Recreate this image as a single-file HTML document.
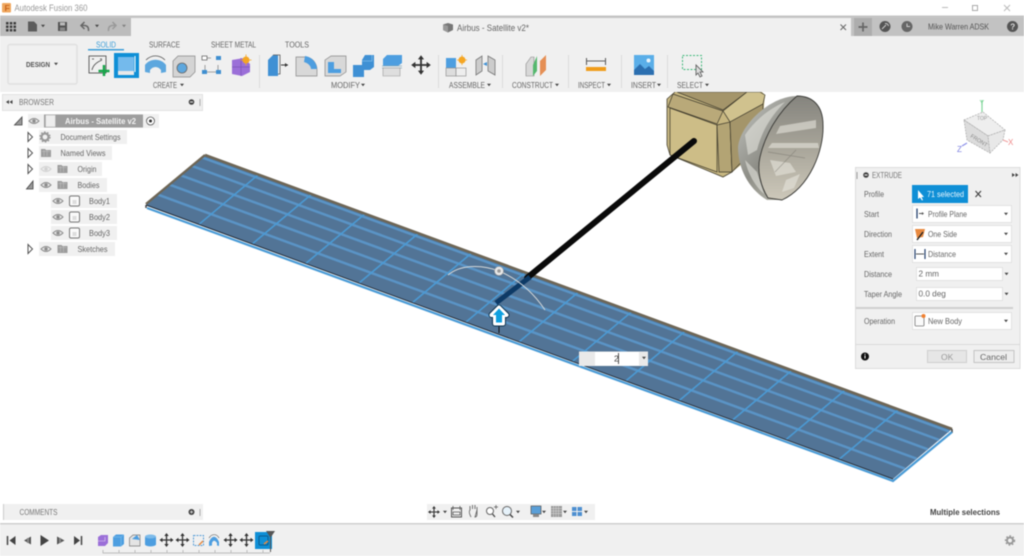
<!DOCTYPE html>
<html>
<head>
<meta charset="utf-8">
<style>
html,body{margin:0;padding:0;background:#fff;width:1024px;height:556px;overflow:hidden}
svg{display:block;filter:blur(.4px)}
text{font-family:"Liberation Sans",sans-serif;font-size:8.500px;fill:#666}
.s{stroke:#5a94c6;stroke-width:2.500;fill:none;vector-effect:non-scaling-stroke}
.l{stroke:#4b9ad4;stroke-width:1.600;fill:none;vector-effect:non-scaling-stroke}
</style>
</head>
<body>
<svg width="1024" height="556" viewBox="0 0 1024 556" xmlns="http://www.w3.org/2000/svg">
<defs>
<g id="eye"><path d="M-5 0Q0-5 5 0Q0 5-5 0Z" fill="#e4e4e4" stroke="#8c8c8c" stroke-width="1"/><circle r="1.700" fill="#8c8c8c"/></g>
<g id="folder"><path d="M-5-4H-1L0-3H5V4H-5Z" fill="#9c9c9c"/><path d="M-4-1.500H4M-2-3V3M1-3V3" stroke="#c4c4c4" stroke-width=".5"/></g>
<g id="mv"><path d="M0-6V6M-6 0H6" stroke="#333" stroke-width="1.300"/><path d="M0-7L-2.200-4H2.200ZM0 7L-2.200 4H2.200ZM-7 0L-4-2.200V2.200ZM7 0L4-2.200V2.200Z" fill="#333"/></g>
<g id="body"><rect x="-5" y="-5" width="10" height="10" rx="1.500" fill="#fafafa" stroke="#777"/><rect x="-2" y="-1" width="4" height="4" fill="#ddd"/></g>
<path id="dn" d="M-2-1.200H2L0 1.200Z" fill="#444"/>
<path id="tri" d="M0-4.500L4.500 0L0 4.500Z" fill="#fff" stroke="#555" stroke-width="1"/>
<linearGradient id="dishO" x1="0" y1="0" x2="1" y2="1"><stop offset="0" stop-color="#c4c6c2"/><stop offset=".45" stop-color="#8e8e87"/><stop offset=".75" stop-color="#b5b5aa"/><stop offset="1" stop-color="#85857c"/></linearGradient>
<linearGradient id="dishI" x1="0" y1="0" x2="0" y2="1"><stop offset="0" stop-color="#85847e"/><stop offset=".45" stop-color="#a5a297"/><stop offset="1" stop-color="#cdc8ba"/></linearGradient>
<clipPath id="vp"><rect x="0" y="92" width="1024" height="431"/></clipPath>
</defs>

<!-- viewport -->
<rect width="1024" height="556" fill="#fff"/>
<g clip-path="url(#vp)">
 <!-- satellite body -->
 <path d="M675 92L667 99V145L670 155L723 177L732 172L760 150L765 95L760 90H675Z" fill="#c6b680"/>
 <path d="M677 92H747L723 110Z" fill="#a4956a" stroke="#3e3a2c" stroke-width=".7"/>
 <path d="M673 94L723 111L717 124L668 107Z" fill="#b9a979" stroke="#3e3a2c" stroke-width=".7"/>
 <path d="M670 108L717 125V172L670 155Z" fill="#cdbd87" stroke="#3e3a2c" stroke-width=".7"/>
 <path d="M717 125L730 122L732 172L719 172Z" fill="#b3a474" stroke="#3e3a2c" stroke-width=".7"/>
 <path d="M723 111L747 92H760L765 95L763 104L730 122Z" fill="#d0c28e" stroke="#3e3a2c" stroke-width=".7"/>
 <path d="M730 122L763 104V140L732 172Z" fill="#a4956a" stroke="#3e3a2c" stroke-width=".7"/>
 <path d="M675 92L667 99V145L670 155L723 177L732 172" fill="none" stroke="#4a4534" stroke-width=".8"/>
 <!-- dish -->
 <path d="M797 96C770 96 740 125 738 147C738 170 750 190 767 200L782 200C810 187 824 150 823 125C822 105 812 96 797 96Z" fill="url(#dishO)"/>
 <path d="M745 135C755 120 770 108 785 102C772 115 762 130 757 150L748 155ZM745 160L757 172L764 194C755 186 748 174 745 160Z" fill="#e2e2dc" opacity=".6"/>
 <path d="M797 96C812 96 823 105 823 125C824 150 810 187 782 200L768 198C760 185 757 170 760 157C765 135 778 112 797 96Z" fill="url(#dishI)" stroke="#3a3a36" stroke-width=".9"/>
 <path d="M772 143H818L819 148H768ZM780 126L816 120V128L776 134ZM770 160L790 163L796 172L776 176ZM786 180L800 174L794 188L782 192Z" fill="#e6e4dc" opacity=".6"/>
 <path d="M768 152L805 158M775 172L796 150" stroke="#6e6c64" stroke-width=".7" opacity=".5" fill="none"/>
 <!-- panel -->
 <path d="M205 155L952 429L893 479L146 205Z" fill="#527496"/>
 <g transform="matrix(53.357 19.571 -59 49.500 205 155)">
  <path class="s" d="M0 .05H14M0 .22H14M0 .41H14M0 .6H14M0 .8H14"/>
  <path class="l" d="M1 0V1M2 0V1M3 0V1M4 0V1M5 0V1M6 0V1M7 0V1M8 0V1M9 0V1M10 0V1M11 0V1M12 0V1M13 0V1"/>
 </g>
 <path d="M205 155L952 429" stroke="#6e6656" stroke-width="2.600" fill="none"/>
 <path d="M205 155L146 204" stroke="#6e6656" stroke-width="2.400" fill="none"/>
 <path d="M146 205L146 208M952 429V433" stroke="#444" stroke-width="1.500"/>
 <path d="M146 205L893 479" stroke="#1f2b3a" stroke-width="1" fill="none"/>
 <path d="M147 208L893 481L952 432" stroke="#4a9bd6" stroke-width="2.200" fill="none"/>
 <!-- rod -->
 <path d="M694 141L527 278" stroke="#0a0a0a" stroke-width="6" stroke-linecap="round"/>
 <path d="M530 277L496 303" stroke="#0d3a66" stroke-width="5"/>
 <!-- manipulator -->
 <path d="M448 275C460 265 480 264 499 271C520 280 535 295 545 310" fill="none" stroke="#d4d8da" stroke-width="1"/>
 <circle cx="499" cy="271" r="4.500" fill="#e8e8e8" stroke="#999" stroke-width=".6"/><circle cx="499" cy="271" r="1.800" fill="#999"/>
 <path d="M499 325V333" stroke="#111" stroke-width="1"/>
 <path d="M499 307.500L506.500 315H503V323.500H495V315H491.500Z" fill="#0b3350" stroke="#0b3350" stroke-width="6" stroke-linejoin="round"/>
 <path d="M499 307.500L506.500 315H503V323.500H495V315H491.500Z" fill="#0ea0e0" stroke="#fff" stroke-width="4" stroke-linejoin="round"/>
 <path d="M499 308.500L505 315H502V322.500H496V315H493Z" fill="#0ea0e0"/>
 <!-- input -->
 <rect x="579" y="351.500" width="69" height="14.500" fill="#e9e9e9"/>
 <rect x="595" y="352" width="44" height="13.500" fill="#fff"/>
 <text x="614" y="361.500" style="fill:#444">2</text><path d="M618.500 353V364" stroke="#222" stroke-width=".8"/>
 <use href="#dn" x="644" y="358"/>
 <!-- view cube -->
 <path d="M964 120L983 112L1005 130L990 153L967 140Z" fill="#e3e3e3"/>
 <path d="M983 112L1005 130L988 136L964 120Z" fill="#eeeeee" stroke="#aaa" stroke-width=".7" stroke-dasharray="2 1"/>
 <path d="M964 120L988 136L990 153L967 140Z" fill="#dcdcdc" stroke="#aaa" stroke-width=".7" stroke-dasharray="2 1"/>
 <path d="M988 136L1005 130L1003 140L990 153Z" fill="#e8e8e8" stroke="#aaa" stroke-width=".7" stroke-dasharray="2 1"/>
 <text x="977" y="120" style="font-size:5px;fill:#999">TOP</text>
 <text x="970" y="137" transform="rotate(32 970 137)" style="font-size:5.500px;fill:#888">FRONT</text>
 <path d="M982 112V100" stroke="#7fd69a" stroke-width="1.200"/><text x="979.500" y="105" style="font-size:7px;fill:#6fce8c">Y</text>
 <path d="M1003 140L1008 142" stroke="#f0a0a0" stroke-width="1.200"/><text x="1008" y="145" style="font-size:8px;fill:#ee8888">X</text>
 <path d="M967 143L962 146" stroke="#8a8ee8" stroke-width="1.200"/><text x="957" y="152" style="font-size:8px;fill:#7a7ee0">Z</text>
</g>

<!-- title bar -->
<rect width="1024" height="15.500" fill="#fff"/>
<rect x="2" y="3" width="9" height="9.500" rx="1" fill="#f0a860"/>
<text x="4.500" y="11" style="font-size:8.500px;font-weight:bold;fill:#c8641c">F</text>
<text x="14.500" y="11" textLength="73" lengthAdjust="spacingAndGlyphs" style="font-size:9.500px;fill:#999">Autodesk Fusion 360</text>
<path d="M942 7.500H948" stroke="#bbb"/>
<rect x="972.500" y="5.500" width="5" height="5" fill="none" stroke="#aaa"/>
<path d="M1004 5L1010 11M1010 5L1004 11" stroke="#bbb"/>
<rect y="15.500" width="1024" height="2.500" fill="#c4c4c4"/>

<!-- toolbar bg -->
<rect y="18" width="1024" height="74" fill="#f0f0f0"/>
<rect y="18" width="131" height="18" fill="#bcbcbc"/>
<rect x="851" y="18" width="173" height="18" fill="#c2c2c2"/>
<rect x="854" y="18" width="18" height="18" fill="#adadad"/>
<!-- quick access -->
<path d="M6 22h2.500v2.500H6zM9.800 22h2.500v2.500H9.800zM13.500 22h2.500v2.500h-2.500zM6 25.500h2.500V28H6zM9.800 25.500h2.500V28H9.800zM13.500 25.500h2.500V28h-2.500zM6 29h2.500v2.500H6zM9.800 29h2.500v2.500H9.800zM13.500 29h2.500v2.500h-2.500z" fill="#3f3f3f"/>
<path d="M28 21.500H34L37 24.500V31.500H28Z" fill="#5c5c5c"/>
<use href="#dn" x="43" y="26"/>
<rect x="58" y="22" width="9" height="9" fill="#555"/><rect x="60" y="22.500" width="5" height="3" fill="#bbb"/><rect x="60" y="27.500" width="5" height="3" fill="#888"/>
<path d="M88.500 31C89 26 86 25 81.500 25.500M84.500 22L81 25.500L84.500 29" fill="none" stroke="#666" stroke-width="1.500"/>
<use href="#dn" x="97" y="26"/>
<path d="M108.500 31C108 26 111 25 115.500 25.500M112.500 22L116 25.500L112.500 29" fill="none" stroke="#999" stroke-width="1.500"/>
<use href="#dn" x="124" y="26" opacity=".5"/>
<!-- doc tab -->
<path d="M443 24.500L448 23L453 24.500V30L448 32.500L443 30Z" fill="#777"/><path d="M443 24.500L448 26V32.500L443 30Z" fill="#999"/>
<text x="457" y="31" textLength="72" lengthAdjust="spacingAndGlyphs" style="font-size:9px;fill:#666">Airbus - Satellite v2*</text>
<path d="M840.500 24.500L846 30M846 24.500L840.500 30" stroke="#666" stroke-width="1"/>
<path d="M863 22.500V31.500M858.500 27H867.500" stroke="#666" stroke-width="1.700"/>
<circle cx="885" cy="26.500" r="5.500" fill="#555"/><path d="M882 29L886 25M885 23.500A3 3 0 0 1 888.500 26" stroke="#ccc" stroke-width="1" fill="none"/>
<circle cx="907" cy="26.500" r="5.500" fill="#666"/><path d="M907 23.500V26.500H910" stroke="#ccc" stroke-width="1" fill="none"/>
<text x="928" y="29.500" textLength="61" lengthAdjust="spacingAndGlyphs" style="font-size:8.500px;fill:#555">Mike Warren ADSK</text>
<circle cx="1012.500" cy="26.500" r="5.500" fill="#555"/><text x="1010.300" y="29.500" style="font-size:8px;font-weight:bold;fill:#ddd">?</text>

<!-- design button -->
<rect x="8" y="44.500" width="69" height="39.500" rx="2" fill="#f1f1f1" stroke="#e0e0e0" stroke-width="1.500"/>
<text x="26" y="67" textLength="24" lengthAdjust="spacingAndGlyphs" style="font-size:7.500px;font-weight:bold;fill:#555">DESIGN</text>
<use href="#dn" x="56" y="64"/>
<!-- tabs -->
<text x="96" y="47.500" textLength="20" lengthAdjust="spacingAndGlyphs" style="font-size:8px;fill:#3d9ed8">SOLID</text>
<rect x="88" y="49" width="36" height="1.500" fill="#3d9ed8"/>
<text x="149" y="47.500" textLength="31" lengthAdjust="spacingAndGlyphs" style="font-size:8px">SURFACE</text>
<text x="211" y="47.500" textLength="45" lengthAdjust="spacingAndGlyphs" style="font-size:8px">SHEET METAL</text>
<text x="285" y="47.500" textLength="24" lengthAdjust="spacingAndGlyphs" style="font-size:8px">TOOLS</text>

<!-- create icons -->
<rect x="89" y="56" width="17" height="17" fill="none" stroke="#444" stroke-width=".8"/>
<path d="M92 70C93 65 97 62 102 60" fill="none" stroke="#444" stroke-width=".8"/>
<path d="M92 59H94M100 59H102" stroke="#666"/>
<path d="M104 65V76M98.500 71H109.500" stroke="#17a54a" stroke-width="2.500"/>
<rect x="114" y="53" width="25" height="25" fill="#0f8fd6"/>
<path d="M118 57H134V74H118Z" fill="#74baec"/><path d="M118 71H134V75H118Z" fill="#e9e9e9"/><path d="M135 56V72" stroke="#fff"/>
<path d="M145 65C150 58 161 58 166 65V72L161 73V70C158 66 153 66 150 70V73L145 72Z" fill="#5da7de"/><path d="M146 60C152 54 160 55 165 60" fill="none" stroke="#555" stroke-width=".8"/>
<path d="M173 61L178 56H195V72L190 77H173Z" fill="#d4d4d4" stroke="#888" stroke-width=".7"/><circle cx="182" cy="68" r="5" fill="#5da7de" stroke="#666" stroke-width=".8"/>
<path d="M205 58H211M205 65V71M207 72H216M218 65V70" stroke="#888" stroke-width=".8"/>
<rect x="202" y="56" width="5" height="4" fill="#fff" stroke="#555" stroke-width=".7"/><rect x="216" y="56" width="5" height="4" fill="#3f8fd0"/><rect x="202" y="70" width="5" height="4" fill="#3f8fd0"/><rect x="216" y="70" width="5" height="4" fill="#3f8fd0"/>
<path d="M232 60L244 58L250 64V72L242 76L232 74Z" fill="#9b6fd8"/><path d="M232 67H250M241 58V76" stroke="#7c55b8" stroke-width=".7"/>
<circle cx="246" cy="60" r="3.500" fill="#f5a623"/><path d="M246 54.500V65.500M240.500 60H251.500" stroke="#f5a623" stroke-width=".8"/>
<text x="153" y="88" textLength="24" lengthAdjust="spacingAndGlyphs" style="font-size:7.800px">CREATE</text><use href="#dn" x="182" y="85"/>
<rect x="259" y="55" width="1" height="33" fill="#dcdcdc"/>

<!-- modify icons -->
<path d="M268 60L273 55H278V76H268Z" fill="#3f90d4"/><path d="M273 55H280V74H278" fill="none" stroke="#555" stroke-width=".8"/><path d="M281 65H288" stroke="#333"/><path d="M288 65L285 63V67Z" fill="#333"/>
<path d="M296 57H305C312 57 317 63 317 70V76H296Z" fill="#d8d8d8" stroke="#888" stroke-width=".7"/><path d="M305 56C312 57 317 63 317 69H311C311 66 308 63 304 62Z" fill="#4d9ee0"/>
<path d="M325 60L331 56H346V72L340 76H325Z" fill="#d8d8d8" stroke="#888" stroke-width=".7"/><path d="M328 62H334V69H341V73H328Z" fill="#4d9ee0"/>
<path d="M353 65H362V60L365 55H374V67L370 70H364V77H353Z" fill="#3f90d4"/><path d="M362 61H372V55" fill="none" stroke="#7dbbea" stroke-width=".8"/>
<path d="M383 59L387 55H402V63L398 66H383Z" fill="#4d9ee0"/><path d="M382 66H402M382 68H402" stroke="#8ab" stroke-width=".8"/><path d="M383 68H400V76H383Z" fill="#dedede" stroke="#999" stroke-width=".6"/>
<use href="#mv" transform="translate(421 65) scale(1.400)"/>
<text x="331" y="88" textLength="29" lengthAdjust="spacingAndGlyphs" style="font-size:7.800px">MODIFY</text><use href="#dn" x="363" y="85"/>
<rect x="438" y="55" width="1" height="33" fill="#dcdcdc"/>

<!-- assemble -->
<rect x="446" y="58" width="10" height="10" fill="#4d9ee0"/><rect x="446" y="68" width="10" height="8" fill="#ddd" stroke="#888" stroke-width=".6"/><rect x="456" y="68" width="10" height="8" fill="#eee" stroke="#888" stroke-width=".6"/>
<circle cx="462" cy="60" r="3.500" fill="#f5a623"/><path d="M462 55V65M457 60H467" stroke="#f5a623" stroke-width=".8"/>
<path d="M476 60L482 56V71L476 75ZM488 56L495 60V75L488 71Z" fill="#ccc" stroke="#777" stroke-width=".8"/><path d="M483 64L487 62V66Z" fill="#3f90d4"/>
<text x="449" y="88" textLength="36" lengthAdjust="spacingAndGlyphs" style="font-size:7.800px">ASSEMBLE</text><use href="#dn" x="489" y="85"/>
<rect x="502" y="55" width="1" height="33" fill="#dcdcdc"/>

<!-- construct -->
<path d="M526 64L531 57H534V76H526Z" fill="#d8d8d8" stroke="#888" stroke-width=".6"/>
<path d="M533 65L537 56V71L533 76Z" fill="#55b86e"/><path d="M540 61L546 55V70L540 76Z" fill="#e58f55"/>
<text x="512" y="88" textLength="41" lengthAdjust="spacingAndGlyphs" style="font-size:7.800px">CONSTRUCT</text><use href="#dn" x="557" y="85"/>
<rect x="568" y="55" width="1" height="33" fill="#dcdcdc"/>

<!-- inspect -->
<path d="M587 61H605M586.500 58V65M605.500 58V65" stroke="#333" stroke-width=".8"/>
<rect x="586" y="67" width="20" height="4" fill="#f09c1a"/>
<text x="578" y="88" textLength="27" lengthAdjust="spacingAndGlyphs" style="font-size:7.800px">INSPECT</text><use href="#dn" x="609" y="85"/>
<rect x="621" y="55" width="1" height="33" fill="#dcdcdc"/>

<!-- insert -->
<rect x="634" y="55" width="20" height="20" fill="#5aaee8"/>
<path d="M634 75V70L640 64L645 69L649 66L654 71V75Z" fill="#2c6fb0"/><circle cx="648.500" cy="60.500" r="2" fill="#e8f4fc"/>
<text x="631" y="88" textLength="25" lengthAdjust="spacingAndGlyphs" style="font-size:7.800px">INSERT</text><use href="#dn" x="659" y="85"/>
<rect x="667" y="55" width="1" height="33" fill="#dcdcdc"/>

<!-- select -->
<rect x="682.500" y="55.500" width="19" height="14" fill="none" stroke="#3fb77a" stroke-dasharray="2 1.500"/>
<path d="M696 65V75L698 73L700 77L702 76L700 72L703 72Z" fill="#ddd" stroke="#555" stroke-width=".8"/>
<text x="677" y="88" textLength="26" lengthAdjust="spacingAndGlyphs" style="font-size:7.800px">SELECT</text><use href="#dn" x="707" y="85"/>

<!-- browser -->
<rect x="2.500" y="94.500" width="200" height="16" fill="#f0f0f0" stroke="#e2e2e2"/>
<path d="M6 102L9 100V104ZM9.500 102L12.500 100V104Z" fill="#444"/>
<text x="19" y="105" textLength="35" lengthAdjust="spacingAndGlyphs" style="font-size:8px;fill:#777">BROWSER</text>
<circle cx="191.500" cy="102" r="2.800" fill="#444"/><rect x="190" y="101.500" width="3" height="1" fill="#eee"/>
<rect x="199.500" y="99" width="1" height="7" fill="#aaa"/>

<g>
<rect x="28" y="114" width="131" height="14" fill="#f0f0f0"/>
<rect x="44" y="114.500" width="99" height="13" fill="#9e9e9e"/>
<rect x="45.500" y="115" width="10" height="12" fill="#eee" stroke="#aaa" stroke-width=".5"/>
<text x="65" y="124" textLength="71" lengthAdjust="spacingAndGlyphs" style="font-size:8.500px;font-weight:bold;fill:#f4f4f4">Airbus - Satellite v2</text>
<circle cx="150.500" cy="121" r="4" fill="#fff" stroke="#555" stroke-width=".8"/><circle cx="150.500" cy="121" r="1.500" fill="#333"/>
<use href="#eye" x="34" y="121"/>
<path d="M14.500 125H22V117Z" fill="#999" stroke="#444" stroke-width=".8"/>

<rect x="39" y="130" width="88" height="14" fill="#f0f0f0"/>
<use href="#tri" x="28" y="137"/>
<circle cx="45" cy="137" r="3.500" fill="none" stroke="#999" stroke-width="2.200"/><circle cx="45" cy="137" r="5" fill="none" stroke="#999" stroke-width="1.300" stroke-dasharray="1.600 1.600"/>
<text x="60.500" y="140" textLength="60" lengthAdjust="spacingAndGlyphs" style="font-size:8.500px">Document Settings</text>

<rect x="39" y="146" width="73" height="14" fill="#f0f0f0"/>
<use href="#tri" x="28" y="153"/>
<use href="#folder" x="46" y="153"/>
<text x="60.500" y="156" textLength="45" lengthAdjust="spacingAndGlyphs" style="font-size:8.500px">Named Views</text>

<rect x="39" y="162" width="63" height="14" fill="#f0f0f0"/>
<use href="#tri" x="28" y="169"/>
<use href="#eye" x="46" y="169" opacity=".3"/>
<use href="#folder" x="62.500" y="169"/>
<text x="77.500" y="172" textLength="19" lengthAdjust="spacingAndGlyphs" style="font-size:8.500px">Origin</text>

<rect x="39" y="178" width="68" height="14" fill="#f0f0f0"/>
<path d="M26.500 189H33V181Z" fill="#999" stroke="#444" stroke-width=".8"/>
<use href="#eye" x="46" y="185"/>
<use href="#folder" x="62.500" y="185"/>
<text x="77.500" y="188" textLength="22" lengthAdjust="spacingAndGlyphs" style="font-size:8.500px">Bodies</text>

<rect x="51" y="194" width="66" height="14" fill="#f0f0f0"/>
<use href="#eye" x="58" y="201"/><use href="#body" x="74.500" y="201"/>
<text x="89" y="204" textLength="21" lengthAdjust="spacingAndGlyphs" style="font-size:8.500px">Body1</text>
<rect x="51" y="210" width="66" height="14" fill="#f0f0f0"/>
<use href="#eye" x="58" y="217"/><use href="#body" x="74.500" y="217"/>
<text x="89" y="220" textLength="21" lengthAdjust="spacingAndGlyphs" style="font-size:8.500px">Body2</text>
<rect x="51" y="226" width="66" height="14" fill="#f0f0f0"/>
<use href="#eye" x="58" y="233"/><use href="#body" x="74.500" y="233"/>
<text x="89" y="236" textLength="21" lengthAdjust="spacingAndGlyphs" style="font-size:8.500px">Body3</text>

<rect x="39" y="242" width="76" height="14" fill="#f0f0f0"/>
<use href="#tri" x="28" y="249"/>
<use href="#eye" x="46" y="249"/>
<use href="#folder" x="62.500" y="249"/>
<text x="77.500" y="252" textLength="30" lengthAdjust="spacingAndGlyphs" style="font-size:8.500px">Sketches</text>
</g>

<!-- extrude panel -->
<rect x="855.500" y="167.500" width="164.500" height="201" fill="#f0f0f0" stroke="#dcdcdc"/>
<path d="M857 172V179" stroke="#999"/>
<circle cx="866" cy="175" r="2.800" fill="#444"/><rect x="864.500" y="174.500" width="3" height="1" fill="#eee"/>
<text x="872" y="178" textLength="30" lengthAdjust="spacingAndGlyphs" style="font-size:8px;fill:#777">EXTRUDE</text>
<path d="M1012 173L1015 175L1012 177ZM1015.500 173L1018.500 175L1015.500 177Z" fill="#444"/>
<text x="864" y="197" textLength="20" lengthAdjust="spacingAndGlyphs" style="font-size:8.200px">Profile</text>
<rect x="912" y="185" width="56" height="18" fill="#0f8fd6"/>
<path d="M918 190V199L920 197.500L922 200.500L923 200L921.500 197H924Z" fill="#fff"/>
<text x="927" y="197" textLength="37" lengthAdjust="spacingAndGlyphs" style="font-size:8.500px;fill:#e8f6ff">71 selected</text>
<path d="M975.500 191L981 197M981 191L975.500 197" stroke="#444" stroke-width="1.200"/>

<text x="864" y="217" textLength="15" lengthAdjust="spacingAndGlyphs" style="font-size:8.200px">Start</text>
<rect x="912.500" y="205.500" width="99" height="17" fill="#fff" stroke="#e2e2e2"/>
<path d="M917 208.500V218.500" stroke="#23406e" stroke-width="1.300"/><path d="M919 213.500H922.500" stroke="#555"/><path d="M924 213.500L922 212V215Z" fill="#555"/>
<text x="928" y="217" textLength="39" lengthAdjust="spacingAndGlyphs" style="font-size:8.200px">Profile Plane</text>
<use href="#dn" x="1006" y="214"/>

<text x="864" y="237" textLength="28" lengthAdjust="spacingAndGlyphs" style="font-size:8.200px">Direction</text>
<rect x="912.500" y="225.500" width="99" height="17" fill="#fff" stroke="#e2e2e2"/>
<path d="M915 229L925 229L923 237L917 238Z" fill="#e8893f"/><path d="M917 240L923 232" stroke="#222" stroke-width="1.400"/>
<text x="928" y="237" textLength="29" lengthAdjust="spacingAndGlyphs" style="font-size:8.200px">One Side</text>
<use href="#dn" x="1006" y="234"/>

<text x="864" y="257" textLength="20" lengthAdjust="spacingAndGlyphs" style="font-size:8.200px">Extent</text>
<rect x="912.500" y="245.500" width="99" height="17" fill="#fff" stroke="#e2e2e2"/>
<path d="M915 249V259M925 249V259" stroke="#23406e" stroke-width="1.200"/><path d="M916 254H924" stroke="#555"/>
<text x="928" y="257" textLength="28" lengthAdjust="spacingAndGlyphs" style="font-size:8.200px">Distance</text>
<use href="#dn" x="1006" y="254"/>

<text x="864" y="277" textLength="28" lengthAdjust="spacingAndGlyphs" style="font-size:8.200px">Distance</text>
<rect x="916.500" y="267.500" width="86" height="13" fill="#fff" stroke="#e2e2e2"/>
<text x="918.500" y="276.500" style="font-size:8.200px">2 mm</text>
<use href="#dn" x="1006.500" y="274"/>

<text x="864" y="297" textLength="38" lengthAdjust="spacingAndGlyphs" style="font-size:8.200px">Taper Angle</text>
<rect x="916.500" y="287.500" width="86" height="13" fill="#fff" stroke="#e2e2e2"/>
<text x="918.500" y="296.500" style="font-size:8.200px">0.0 deg</text>
<use href="#dn" x="1006.500" y="294"/>

<rect x="856" y="307" width="157" height="2" fill="#cfcfcf"/>

<text x="864" y="324" textLength="31" lengthAdjust="spacingAndGlyphs" style="font-size:8.200px">Operation</text>
<rect x="912.500" y="312.500" width="99" height="17" fill="#fff" stroke="#e2e2e2"/>
<rect x="915" y="316" width="9" height="10" rx="1" fill="#fafafa" stroke="#777" stroke-width=".8"/><circle cx="923.500" cy="316" r="2" fill="#f08030"/>
<text x="928" y="324" textLength="34" lengthAdjust="spacingAndGlyphs" style="font-size:8.200px">New Body</text>
<use href="#dn" x="1006" y="321"/>

<rect x="856" y="344" width="164" height="1" fill="#dadada"/>
<circle cx="865" cy="356.500" r="4" fill="#111"/><rect x="864.500" y="355.500" width="1" height="3" fill="#fff"/><rect x="864.500" y="353.800" width="1" height="1" fill="#fff"/>
<rect x="927.500" y="350.500" width="39" height="12" fill="#e6e6e6" stroke="#cfcfcf"/>
<text x="941" y="360" style="font-size:8.500px;fill:#999">OK</text>
<rect x="974" y="350.500" width="40" height="12" fill="#ededed" stroke="#c4c4c4"/>
<text x="980" y="360" textLength="27" lengthAdjust="spacingAndGlyphs" style="font-size:8.500px">Cancel</text>

<!-- comments -->
<rect x="3" y="504" width="200" height="16" fill="#f0f0f0"/>
<rect x="3" y="504" width="1" height="16" fill="#ccc"/>
<text x="19.500" y="515" textLength="38" lengthAdjust="spacingAndGlyphs" style="font-size:8px;fill:#777">COMMENTS</text>
<circle cx="191.500" cy="512" r="3" fill="#444"/><path d="M190 512H193M191.500 510.500V513.500" stroke="#eee" stroke-width=".7"/>
<rect x="199.500" y="509" width="1" height="7" fill="#aaa"/>

<!-- nav bar -->
<rect x="427" y="504" width="168" height="16" fill="#f0f0f0"/>
<use href="#mv" transform="translate(434 512) scale(.85)"/><use href="#dn" x="445" y="512"/>
<rect x="451.500" y="508" width="10" height="9" fill="none" stroke="#555"/><path d="M453 510V506M460 510V506M453 512H460V515H453Z" stroke="#555" stroke-width=".8" fill="none"/>
<path d="M471 517C469 513 469 511 470 510V506M472.500 509V505M475 509V505M477 510V507M477 510V514C477 516 476 517 475 517Z" fill="#fff" stroke="#666" stroke-width=".9"/>
<circle cx="490" cy="511" r="3.500" fill="#fff" stroke="#666"/><path d="M492.500 514L495 517" stroke="#444" stroke-width="1.300"/><path d="M496 505V509M494 507H498" stroke="#555" stroke-width=".7"/>
<circle cx="507" cy="511" r="4.500" fill="#e6f2fa" stroke="#666"/><path d="M510 514.500L513 517.500" stroke="#444" stroke-width="1.500"/>
<use href="#dn" x="518" y="512"/>
<rect x="531" y="506" width="10" height="8" fill="#5a9fd8" stroke="#555" stroke-width=".7"/><rect x="533" y="514" width="6" height="3" fill="#888"/>
<use href="#dn" x="544" y="512"/>
<rect x="551" y="506" width="11" height="11" fill="#999"/><path d="M553.500 506V517M556 506V517M558.500 506V517M551 508.500H562M551 511H562M551 513.500H562" stroke="#ddd" stroke-width=".5"/>
<use href="#dn" x="565" y="512"/>
<path d="M572 507h4.500v4H572zM577.500 507h4.500v4h-4.500zM572 512h4.500v4H572zM577.500 512h4.500v4h-4.500z" fill="#4d8fd0"/>
<use href="#dn" x="586" y="512"/>
<text x="930" y="515" textLength="70" lengthAdjust="spacingAndGlyphs" style="font-size:8.500px;font-weight:bold;fill:#444">Multiple selections</text>

<!-- timeline -->
<rect y="523" width="1024" height="33" fill="#f0f0f0"/>
<rect y="523" width="1024" height="1.500" fill="#cfcfcf"/>
<path d="M7.500 536V545" stroke="#444" stroke-width="1.500"/><path d="M15.500 536V545L9.500 540.500Z" fill="#444"/>
<path d="M31 536.500V544.500L24 540.500Z" fill="#555"/><rect x="27" y="538" width="2" height="5" fill="#888"/>
<path d="M40.500 535V546L49 540.500Z" fill="#444"/>
<path d="M57 536.500V544.500L64.500 540.500Z" fill="#555"/><rect x="59" y="538" width="2" height="5" fill="#888"/>
<path d="M74 536V545L80 540.500Z" fill="#444"/><path d="M81.500 536V545" stroke="#444" stroke-width="1.500"/>

<path d="M98 537L101 535H108V543L105 546H98Z" fill="#9b6fd8"/><path d="M98 541H105V537" stroke="#e4d8f5" stroke-width=".6" fill="none"/>
<path d="M113 537L116 534.500H124V544L121 546.500H113Z" fill="#4d9ee0"/><path d="M113 537H121V546.500M121 537L124 534.500" stroke="#8cc6ef" stroke-width=".5" fill="none"/>
<path d="M129.500 538L133 535H140V546H129.500Z" fill="#e4e4e4" stroke="#777" stroke-width=".7"/><path d="M132 539L137 535L140 540Z" fill="#4d9ee0"/>
<ellipse cx="150.500" cy="536.500" rx="5.500" ry="2" fill="#7dbbea"/><path d="M145 536.500V544.500C146 547 155 547 156 544.500V536.500C155 539 146 539 145 536.500Z" fill="#4d9ee0"/>
<use href="#mv" x="166.500" y="540"/>
<use href="#mv" x="182.500" y="540"/>
<rect x="193.500" y="535.500" width="10" height="10" fill="none" stroke="#5a9fd8" stroke-dasharray="2 1"/><path d="M199 545L203 541" stroke="#e8893f" stroke-width="1.500"/>
<path d="M209 542C212 535 216 535 219 542V546L217 545.500V543C215 540 213 540 212 543V545.500L209 546Z" fill="#4d9ee0"/><path d="M209 538C212 533 217 534 219 538" stroke="#555" stroke-width=".6" fill="none"/>
<use href="#mv" x="230.500" y="540"/>
<use href="#mv" x="246.500" y="540"/>
<rect x="255" y="532" width="17" height="17" fill="#0f8fd6"/>
<rect x="259" y="536" width="9" height="9" rx="1" fill="none" stroke="#0b5e90"/><path d="M264 544L268 541" stroke="#e8893f" stroke-width="1.500"/>
<path d="M103 550V553H270M119 550V553M135 550V553M151 550V553M167 550V553M183 550V553M199 550V553M215 550V553M231 550V553M247 550V553M263 550V553" fill="none" stroke="#bdbdbd" stroke-width="1"/>
<path d="M266 531H275L271 537V552H270V537Z" fill="#555"/>
<circle cx="1010" cy="540.500" r="3" fill="none" stroke="#999" stroke-width="2"/><circle cx="1010" cy="540.500" r="4.500" fill="none" stroke="#999" stroke-width="1.400" stroke-dasharray="1.700 1.700"/>
</svg>
</body>
</html>
